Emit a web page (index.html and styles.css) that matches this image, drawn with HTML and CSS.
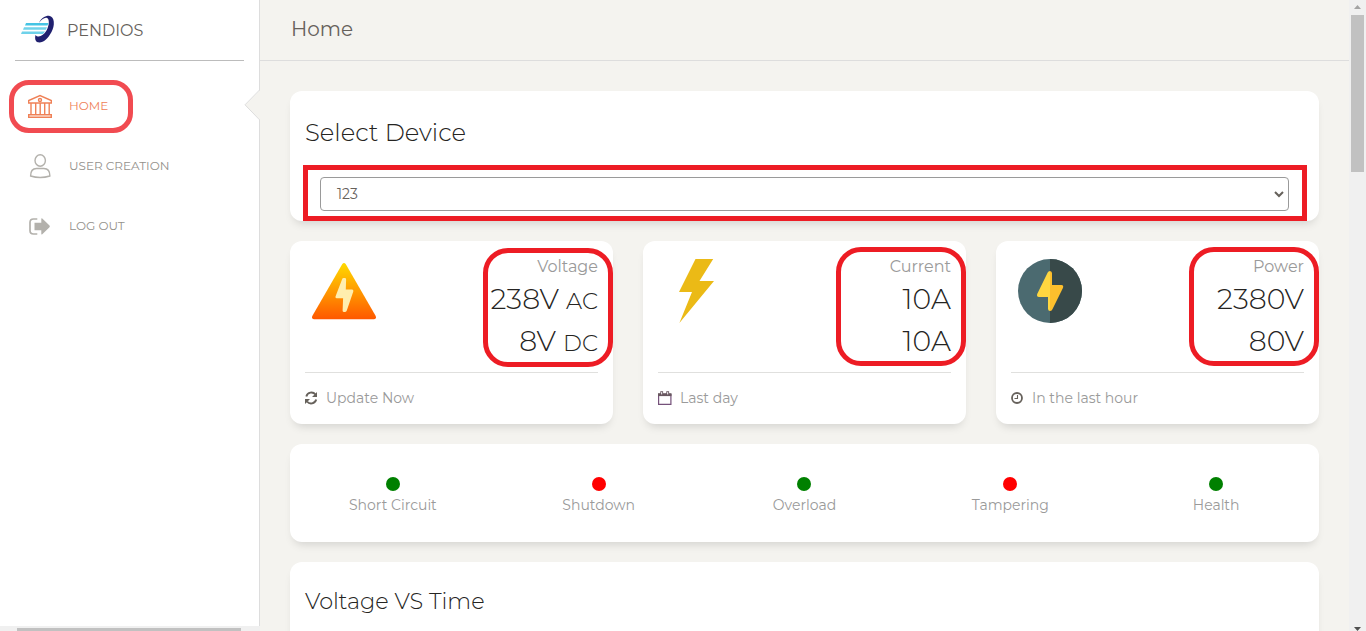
FILE: index.html
```html
<!DOCTYPE html>
<html lang="en">
<head>
<meta charset="utf-8">
<title>Pendios</title>
<link rel="stylesheet" href="styles.css">
</head>
<body>
<div class="app">
  <aside class="sidebar">
    <div class="brand">
      <svg class="logo" width="34" height="30" viewBox="0 0 34 30">
        <path d="M18 8C20 3 25 .5 28 .8C34 1.500 34 11 30.500 17C27 23.500 22.500 27.500 18.500 27.500C14.500 27.500 13.500 24 14.500 20C17.500 23.500 22.500 20.500 25.500 15.500C28.500 10 28.500 4 26 3C23.500 2.200 20.500 4.500 18 8Z" fill="#20206f"/>
        <g fill="#6fd2ea"><path d="M5 8h22.500l-1 2.400H4z" fill="#45c4e4"/><path d="M3 12.200h23l-1.200 2.600H2z"/><path d="M1 16.500h23L22 19H0z"/></g>
      </svg>
      <span class="brand-name">PENDIOS</span>
    </div>
    <nav class="menu">
      <a class="item active">
        <svg width="26" height="26" viewBox="0 0 26 26" fill="none" stroke="#ef8157" stroke-width="1.400">
          <path d="M1.700 10V7.500L13 2.600l11.300 4.900V10zM1.700 24.300v-2.600h22.600v2.600z"/><circle cx="13" cy="7" r="1.500"/>
          <path d="M4 10v11.700M8.700 10v11.700M13.200 10v11.700M17.700 10v11.700M22.200 10v11.700"/>
        </svg>
        <span>HOME</span>
      </a>
      <a class="item">
        <svg width="26" height="26" viewBox="0 0 26 26" fill="none" stroke="#b3b1ac" stroke-width="1.400">
          <ellipse cx="13.200" cy="7.500" rx="5.200" ry="5.700"/>
          <path d="M9.500 15.500h7.400c4.300 0 6 3.700 6 7.500-5.500 1.700-13.900 1.700-19.300 0 0-3.800 1.700-7.500 5.900-7.500z"/>
        </svg>
        <span>USER CREATION</span>
      </a>
      <a class="item">
        <svg width="26" height="26" viewBox="0 0 26 26">
          <path d="M10.300 6H6.500Q3 6 3 9.500v8Q3 21 6.500 21h3.800" fill="none" stroke="#b3b1ac" stroke-width="1.700"/>
          <path d="M7.500 9.800h6.800V6q0-1.200 1-.4l7.200 7q.8.800 0 1.600l-7.200 7q-1 .8-1-.4v-3.600H7.500z" fill="#b3b1ac"/>
        </svg>
        <span>LOG OUT</span>
      </a>
    </nav>
    <svg class="notch" width="16" height="32" viewBox="0 0 16 32"><path d="M16 1L1 16l15 15z" fill="#f4f3ef"/><path d="M15.500 1L1 15.800l14.500 15" fill="none" stroke="#ddd"/></svg>
    <div class="hscroll"><div class="hthumb"></div></div>
  </aside>

  <main class="main">
    <header class="topbar"><span>Home</span></header>
    <section class="content">
      <div class="card select-card">
        <h2 class="heading heading-lg">Select Device</h2>
        <div class="select">
          <span class="select-value">123</span>
          <svg width="10" height="7" viewBox="0 0 10 7"><path d="M1 1l4 4 4-4" fill="none" stroke="#66615b" stroke-width="2"/></svg>
        </div>
        <i class="mark mark-select"></i>
      </div>

      <div class="stats">
        <div class="card stat">
          <div class="stat-body">
            <svg class="pic" width="64" height="64" viewBox="0 0 64 64">
              <defs><linearGradient id="warn" x2="0" y2="1"><stop offset="0" stop-color="#ffda00"/><stop offset=".5" stop-color="#ff9a00"/><stop offset="1" stop-color="#ff5800"/></linearGradient></defs>
              <path d="M30.300 5q1.700-2 3.400 0l30 52q1 3-1.700 3.200H2q-2.700-.2-1.700-3.200z" fill="url(#warn)"/>
              <path d="M31.600 19h1.500q1.100.2 1 1.500l-.3 10h6.500q1.400.4 1 2l-6.500 19q-.4 1.400-1.700 1.400h-1.400q-1.200-.2-1.100-1.500l.5-12.200h-6.600q-1.400-.3-1-1.800l6.500-17q.4-1.400 1.600-1.400z" fill="#ffeeae"/>
            </svg>
            <div class="figures">
              <p class="label">Voltage</p>
              <p class="value">238V<small>AC</small></p>
              <p class="value">8V<small>DC</small></p>
            </div>
          </div>
          <div class="stat-foot">
            <svg width="13" height="14" viewBox="0 0 13 14" fill="none" stroke="#66615b" stroke-width="1.900"><path d="M1.300 5.500C2.500 1.200 7.800.3 10.500 3.500M11.200 8.500C10 12.800 4.700 13.700 2 10.500"/><path d="M12 1v5H7zM0 13V8h5z" fill="#66615b" stroke="none"/></svg>
            <span>Update Now</span>
          </div>
          <i class="mark mark-first"></i>
        </div>
        <div class="card stat">
          <div class="stat-body">
            <svg class="pic" width="64" height="64" viewBox="0 0 64 64"><path d="M30.500 0h17.700L34.500 22H49L14.400 64 27 33H14z" fill="#ebba16"/></svg>
            <div class="figures">
              <p class="label">Current</p>
              <p class="value">10A</p>
              <p class="value">10A</p>
            </div>
          </div>
          <div class="stat-foot">
            <svg width="14" height="14" viewBox="0 0 14 14"><path d="M.6 3.500h12.300v9.900H.6z" fill="none" stroke="#75517a" stroke-width="1.200"/><path d="M0 2.200h13.500v2.900H0z" fill="#68575f"/><path d="M3.700 3.300V.2M9.700 3.300V.2" stroke="#68575f" stroke-width="2.800"/><path d="M3.700 3.400V1.100M9.700 3.400V1.100" stroke="#fff" stroke-width="1"/></svg>
            <span>Last day</span>
          </div>
          <i class="mark mark-stat"></i>
        </div>
        <div class="card stat">
          <div class="stat-body">
            <svg class="pic" width="64" height="64" viewBox="0 0 64 64"><circle cx="32" cy="32" r="32" fill="#4b6a70"/><path d="M32 0a32 32 0 010 64z" fill="#384949"/><path d="M32 12q-1.700 0-2.300 1.500L19.200 35q-.8 3 1.800 3h9v12q.2 2 2 2z" fill="#ffd740"/><path d="M32 12q2 .3 2 2.200V26h9.500q2.600.4 1.300 3.200L34.300 50.500Q33.500 52 32 52z" fill="#fdbf2d"/></svg>
            <div class="figures">
              <p class="label">Power</p>
              <p class="value">2380V</p>
              <p class="value">80V</p>
            </div>
          </div>
          <div class="stat-foot">
            <svg width="13" height="14" viewBox="0 0 13 14" fill="none" stroke="#66615b"><circle cx="6" cy="7" r="5" stroke-width="1.800"/><path d="M6.500 4v3.500h-3" stroke-width="1.100"/></svg>
            <span>In the last hour</span>
          </div>
          <i class="mark mark-stat"></i>
        </div>
      </div>

      <div class="card status">
        <div class="state"><i class="dot ok"></i><span>Short Circuit</span></div>
        <div class="state"><i class="dot bad"></i><span>Shutdown</span></div>
        <div class="state"><i class="dot ok"></i><span>Overload</span></div>
        <div class="state"><i class="dot bad"></i><span>Tampering</span></div>
        <div class="state"><i class="dot ok"></i><span>Health</span></div>
      </div>

      <div class="card chart"><h2 class="heading">Voltage VS Time</h2></div>
    </section>
  </main>

  <div class="vscroll">
    <svg width="17" height="15" viewBox="0 0 17 15"><path d="M5 9l3.500-4L12 9z" fill="#a3a3a3"/></svg>
    <div class="vthumb"></div>
    <svg class="down" width="17" height="6" viewBox="0 0 17 6"><path d="M5 2h7L8.500 6z" fill="#505050"/></svg>
  </div>
  <i class="mark mark-home"></i>
</div>
</body>
</html>
```

FILE: styles.css
```css
* { box-sizing: border-box; }
body { margin: 0; font-family: Montserrat, Inter, "Open Sans", sans-serif; font-weight: 400; background: #f4f3ef; overflow: hidden; }
.app { position: relative; display: flex; height: 631px; overflow: hidden; }
svg { display: block; flex: none; }
span, small, h2, .label { white-space: nowrap; }

.sidebar { position: relative; display: flex; flex-direction: column; width: 260px; flex: none; background: #fff; border-right: 1px solid #ddd; }
.brand { display: flex; align-items: center; height: 61px; margin: 0 15px; padding: 0 0 1px 6px; gap: 12px; border-bottom: 1px solid #bcbcbc; color: #66615b; font-size: 16px; }
.brand-name { padding-top: 2px; }
.menu { display: flex; flex-direction: column; gap: 10px; margin-top: 20px; padding-left: 27px; }
.item { display: flex; align-items: center; gap: 16px; height: 50px; font-size: 12px; color: #94918c; }
.item span { padding-bottom: 2px; }
.item.active { color: #ef8157; }
.notch { position: absolute; right: -1px; top: 89px; }
.hscroll { margin: auto -1px 0 0; height: 5px; background: #f0f0f0; padding: 2px 19px 0 17px; }
.hthumb { height: 3px; background: #c1c1c1; }

.main { flex: 1; min-width: 0; }
.topbar { display: flex; align-items: center; height: 61px; padding: 0 31px 3px; border-bottom: 1px solid #ddd; color: #66615b; font-size: 20px; }
.content { display: flex; flex-direction: column; gap: 20px; padding: 30px; }
.card { position: relative; background: #fff; border-radius: 12px; box-shadow: 0 6px 10px -4px rgba(0,0,0,.15); }
.heading { margin: 0; color: #252422; font-weight: 300; font-size: 22.400px; line-height: 32px; }
.heading-lg { font-size: 24.300px; }
.select-card { height: 130px; padding: 25px 30px 10px 15px; }
.select { display: flex; align-items: center; justify-content: space-between; height: 34px; margin: 29px 0 0 15px; padding: 0 4px 0 16px; border: 1px solid #9a9a9a; border-radius: 4px; color: #66615b; font-size: 14px; }
.select-value { padding-bottom: 1px; }

.stats { display: grid; grid-template-columns: repeat(3, 1fr); gap: 30px; }
.stat { height: 183px; padding: 0 15px; }
.stat-body { display: flex; justify-content: space-between; height: 132px; padding: 14px 0 0 7px; border-bottom: 1px solid #e0e0de; }
.pic { margin-top: 4px; }
.label, .value { margin: 0; text-align: right; }
.label { margin-bottom: -1px; color: #9a9a9a; font-size: 16px; line-height: 24px; }
.value { color: #252422; font-weight: 300; font-size: 28.300px; line-height: 42px; white-space: nowrap; }
.value small { font-size: 22.800px; line-height: 1; margin-left: 7px; }
.stat-foot { display: flex; align-items: center; gap: 8px; height: 50px; color: #9a9a9a; font-size: 14px; }
.stat-foot span { padding-bottom: 1px; }

.status { display: grid; grid-template-columns: repeat(5, 1fr); height: 98px; padding-top: 33px; }
.state { display: flex; flex-direction: column; align-items: center; gap: 5px; color: #9a9a9a; font-size: 14px; line-height: 18px; }
.dot { width: 14px; height: 14px; border-radius: 50%; }
.ok { background: green; }
.bad { background: red; }
.chart { height: 400px; padding: 23px 15px; }

.vscroll { display: flex; flex-direction: column; width: 17px; flex: none; background: #f0f0f0; }
.vthumb { height: 157px; width: 13px; margin-left: 2px; background: #c1c1c1; }
.down { margin-top: auto; }

.mark { position: absolute; border: 5px solid #ed1c24; }
.mark-home { left: 9px; top: 80px; width: 124px; height: 53px; border-color: #f14b51; border-radius: 20px; }
.mark-select { left: 13px; top: 74px; width: 1004px; height: 56px; }
.mark-first { right: 0; top: 7px; width: 130px; height: 119px; border-radius: 25px; }
.mark-stat { right: 0; top: 6px; width: 130px; height: 119px; border-radius: 25px; }
```
